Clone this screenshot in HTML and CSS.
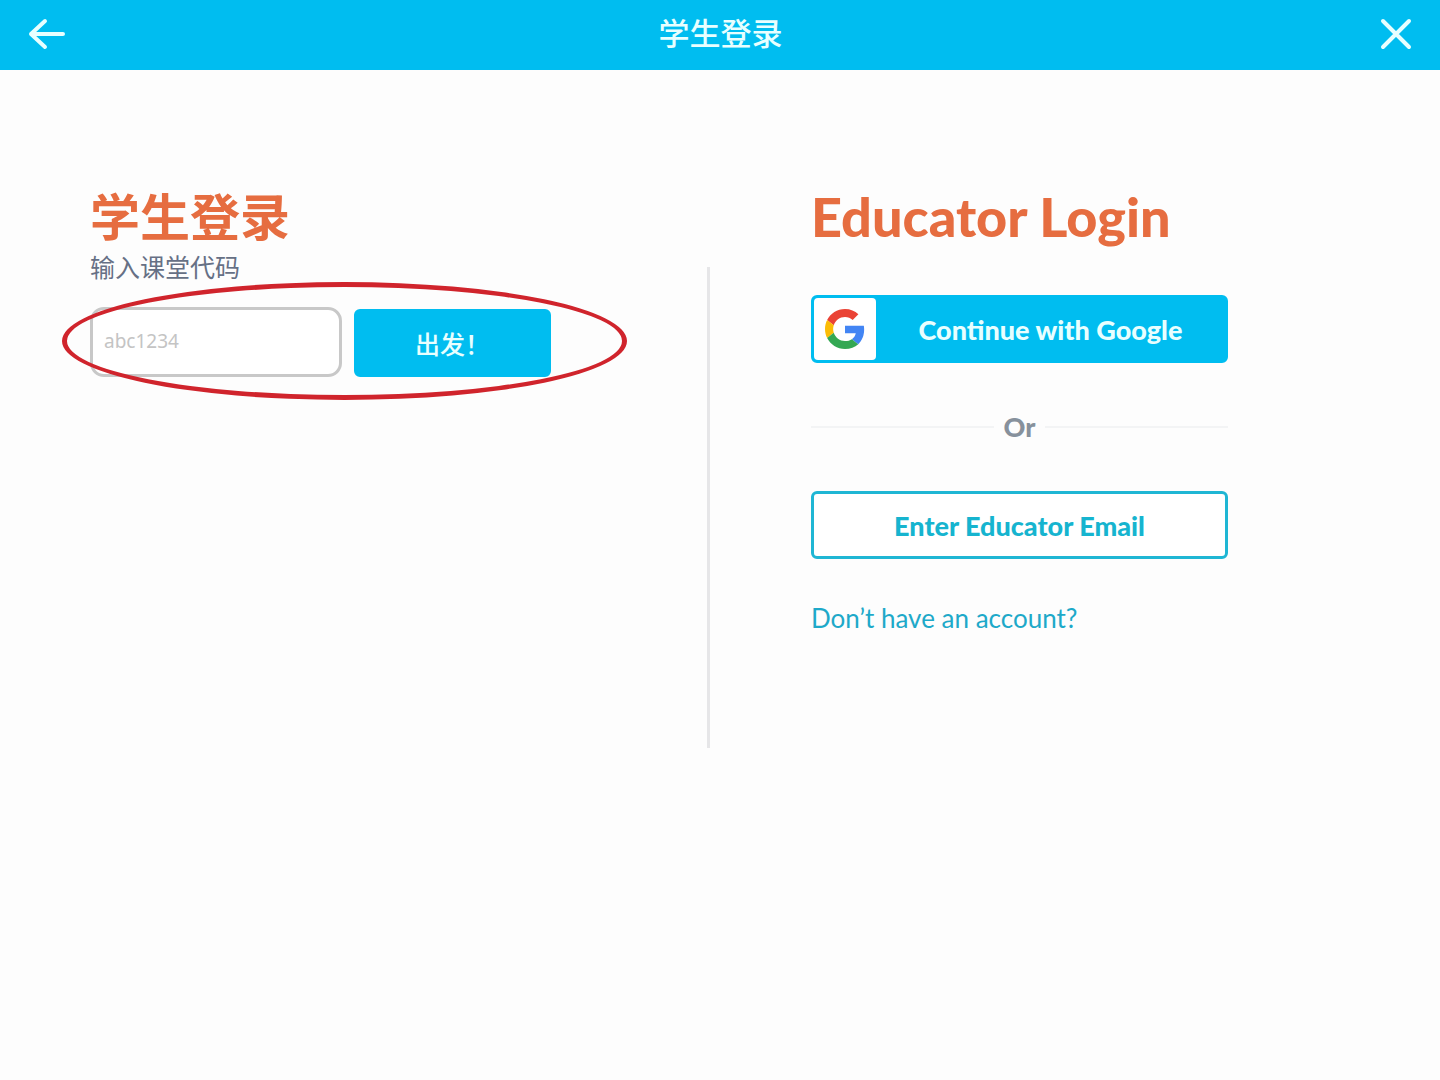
FILE: index.html
```html
<!DOCTYPE html>
<html lang="zh-CN">
<head>
  <meta charset="UTF-8">
  <meta name="viewport" content="width=device-width, initial-scale=1">
  <title>学生登录</title>
  <link rel="stylesheet" href="styles.css">
</head>
<body>
  <header class="top-bar">
    <button type="button" class="icon-button" aria-label="返回">
      <svg width="40" height="40" viewBox="0 0 40 40">
        <path d="M37 21H5M19 8L5 21l14 13"/>
      </svg>
    </button>
    <h1>学生登录</h1>
    <button type="button" class="icon-button" aria-label="关闭">
      <svg width="40" height="40" viewBox="0 0 40 40">
        <path d="M8 8l26 26M34 8L8 34"/>
      </svg>
    </button>
  </header>

  <main class="login">
    <section class="student">
      <h2>学生登录</h2>
      <label for="class-code">输入课堂代码</label>
      <form class="code-form">
        <input type="text" id="class-code" name="code" placeholder="abc1234">
        <button type="submit" class="btn go">出发！</button>
        <div class="highlight"></div>
      </form>
    </section>

    <div class="divider"></div>

    <section class="educator">
      <h2>Educator Login</h2>
      <button type="button" class="btn google">
        <span class="google-icon">
          <svg width="40" height="40" viewBox="0 0 48 48">
            <path fill="#ea4335" d="M24 9.5c3.54 0 6.71 1.22 9.21 3.6l6.85-6.85C35.9 2.38 30.47 0 24 0 14.62 0 6.51 5.38 2.56 13.22l7.98 6.19C12.43 13.72 17.74 9.5 24 9.5z"/>
            <path fill="#4285f4" d="M46.98 24.55c0-1.57-.15-3.09-.38-4.55H24v9.02h12.94c-.58 2.96-2.26 5.48-4.78 7.18l7.73 6c4.51-4.18 7.09-10.36 7.09-17.65z"/>
            <path fill="#fbbc05" d="M10.53 28.59c-.48-1.45-.76-2.99-.76-4.59s.27-3.14.76-4.59l-7.98-6.19C.92 16.46 0 20.12 0 24c0 3.88.92 7.54 2.56 10.78l7.97-6.19z"/>
            <path fill="#34a853" d="M24 48c6.48 0 11.93-2.13 15.89-5.81l-7.73-6c-2.15 1.45-4.92 2.3-8.16 2.3-6.26 0-11.57-4.22-13.47-9.91l-7.98 6.19C6.51 42.62 14.62 48 24 48z"/>
          </svg>
        </span>
        <span class="google-text">Continue with Google</span>
      </button>
      <div class="or">Or</div>
      <button type="button" class="btn outline">Enter Educator Email</button>
      <a href="#signup">Don’t have an account?</a>
    </section>
  </main>
</body>
</html>
```
FILE: styles.css
```css
* {
  box-sizing: border-box;
}
body {
  margin: 0;
  background-color: #fdfdfd;
  font-family: Lato, "Noto Sans CJK SC", sans-serif;
}
h1, h2 {
  margin: 0;
}
.top-bar {
  display: flex;
  justify-content: space-between;
  align-items: center;
  height: 70px;
  padding: 0 25px 4px 26px;
  background-color: #00bdf0;
  color: #e8ffff;
}
.top-bar h1 {
  font-size: 31px;
  font-weight: 500;
  line-height: 40px;
}
.icon-button {
  padding: 0;
  border: 0;
  background: none;
  color: inherit;
  cursor: pointer;
}
.icon-button svg {
  display: block;
  fill: none;
  stroke: currentColor;
  stroke-width: 4;
  stroke-linecap: round;
  stroke-linejoin: round;
}
.login {
  display: grid;
  grid-template-columns: calc(50% - 13px) 3px 1fr;
  padding-top: 117px;
}
.student {
  padding-left: 90px;
}
.login h2 {
  color: #e66d40;
  font-size: 50px;
  line-height: 60px;
}
.login .educator h2 {
  font-size: 54px;
  font-weight: 900;
}
.student label {
  display: block;
  color: #667085;
  font-size: 25px;
  font-weight: 400;
  line-height: 40px;
}
.code-form {
  position: relative;
  display: flex;
  align-items: flex-end;
  gap: 12px;
  margin-top: 20px;
}
.code-form input {
  width: 252px;
  height: 70px;
  padding: 0 11px 2px;
  border: 3px solid #c8c8c8;
  border-radius: 14px;
  background-color: #fff;
  font-family: "Noto Sans", sans-serif;
  font-size: 19px;
}
.code-form input::placeholder {
  color: #c4c4c4;
}
.btn {
  height: 68px;
  padding: 0;
  border: 3px solid #00bdf0;
  border-radius: 6px;
  background-color: #00bdf0;
  color: #e8ffff;
  font-family: inherit;
  font-size: 27px;
  font-weight: 900;
  cursor: pointer;
}
.go {
  width: 197px;
  font-size: 25px;
  font-weight: 500;
}
/* red ring around the code form */
.highlight {
  position: absolute;
  top: -25px;
  left: -28px;
  width: 565px;
  height: 118px;
  border: 5px solid #d0242c;
  border-radius: 50%;
  pointer-events: none;
}
.divider {
  height: 481px;
  margin-top: 80px;
  background-color: #e6e6e8;
}
.educator {
  display: flex;
  flex-direction: column;
  max-width: 518px;
  padding-left: 101px;
}
.google {
  display: flex;
  align-items: center;
  margin-top: 48px;
}
.google-icon {
  display: flex;
  align-items: center;
  justify-content: center;
  width: 62px;
  height: 62px;
  border-radius: 4px;
  background-color: #fff;
}
.google-text {
  flex: 1;
}
.or {
  display: flex;
  align-items: center;
  gap: 10px;
  margin: 44px 0;
  color: #87919c;
  font-size: 27px;
  font-weight: 900;
  line-height: 40px;
}
.or::before, .or::after {
  content: "";
  flex: 1;
  height: 2px;
  background-color: #f3f4f5;
}
.outline {
  border-color: #1fb6d4;
  background-color: #fff;
  color: #16b4cf;
}
.educator a {
  align-self: flex-start;
  margin-top: 39px;
  color: #1ea9c9;
  font-size: 26px;
  line-height: 40px;
  text-decoration: none;
}
```
